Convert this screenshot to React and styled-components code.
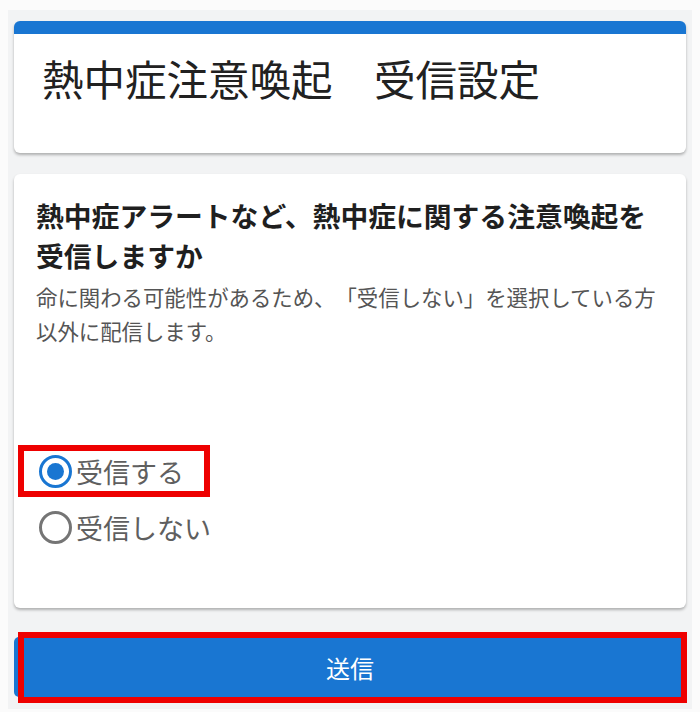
import React, { useState } from 'react';
import styled, { createGlobalStyle } from 'styled-components';

const GlobalStyle = createGlobalStyle`
  body {
    margin: 0;
    background: #fbfbfb;
    font-family: "Noto Sans CJK JP", "Noto Sans", sans-serif;
    text-spacing-trim: space-all;
  }
`;

const Page = styled.div`
  margin: 10px 8px 0;
  padding: 11px 6px 12px;
  background: #f2f3f4;
  display: flex;
  flex-direction: column;
`;

const Card = styled.div`
  background: #fff;
  border-radius: 6px;
  box-shadow: 0 2px 3px rgba(0, 0, 0, 0.28);
  overflow: hidden;
`;

const HeaderCard = styled(Card)`
  border-top: 13px solid #1976d2;
  padding: 16px 28px 47px;
`;

const Title = styled.h1`
  margin: 0;
  font-size: 41.5px;
  line-height: 56px;
  font-weight: 400;
  color: #212121;
  white-space: nowrap;
`;

const FormCard = styled(Card)`
  margin-top: 21px;
  padding: 21px 22px 53px;
  overflow: visible;
`;

const Question = styled.h2`
  margin: 0;
  font-size: 27.8px;
  line-height: 40px;
  font-weight: 700;
  color: #1f1f1f;
`;

const Note = styled.p`
  margin: 5px 0 0;
  font-size: 21.4px;
  line-height: 34px;
  color: #555;
`;

const RadioGroup = styled.div`
  margin-top: 95px;
  display: flex;
  flex-direction: column;
`;

const RadioRow = styled.label`
  position: relative;
  display: flex;
  align-items: center;
  gap: 3px;
  height: 56px;
  padding-left: 2px;
  font-size: 27px;
  color: #5f5f5f;
  cursor: pointer;
`;

const Highlight = styled.span`
  position: absolute;
  border: 6px solid #ee0000;
  pointer-events: none;
`;

const RadioHighlight = styled(Highlight)`
  left: -18px;
  top: 2px;
  width: 180px;
  height: 40px;
`;

const ButtonWrap = styled.div`
  position: relative;
  margin-top: 29px;
`;

const SubmitButton = styled.button`
  width: 100%;
  height: 60px;
  border: none;
  border-radius: 5px;
  background: #1976d2;
  color: #fff;
  font-family: inherit;
  font-size: 24px;
`;

const ButtonHighlight = styled(Highlight)`
  left: 4px;
  top: -5px;
  width: 657px;
  height: 59px;
`;

const RadioIcon = ({ checked }) => (
  <svg width="35" height="35" viewBox="0 0 35 35">
    <circle
      cx="17.5"
      cy="17.5"
      r="15"
      fill="none"
      stroke={checked ? '#1976d2' : '#757575'}
      strokeWidth="3"
    />
    {checked && <circle cx="17.5" cy="17.5" r="8.5" fill="#1976d2" />}
  </svg>
);

const options = [
  { value: 'yes', label: '受信する' },
  { value: 'no', label: '受信しない' },
];

const App = () => {
  const [choice, setChoice] = useState('yes');
  return (
    <>
      <GlobalStyle />
      <Page>
        <HeaderCard>
          <Title>熱中症注意喚起　受信設定</Title>
        </HeaderCard>
        <FormCard>
          <Question>熱中症アラートなど、熱中症に関する注意喚起を受信しますか</Question>
          <Note>命に関わる可能性があるため、「受信しない」を選択している方以外に配信します。</Note>
          <RadioGroup>
            {options.map((opt) => (
              <RadioRow key={opt.value} onClick={() => setChoice(opt.value)}>
                <RadioIcon checked={choice === opt.value} />
                {opt.label}
                {opt.value === 'yes' && <RadioHighlight />}
              </RadioRow>
            ))}
          </RadioGroup>
        </FormCard>
        <ButtonWrap>
          <SubmitButton>送信</SubmitButton>
          <ButtonHighlight />
        </ButtonWrap>
      </Page>
    </>
  );
};

export default App;
